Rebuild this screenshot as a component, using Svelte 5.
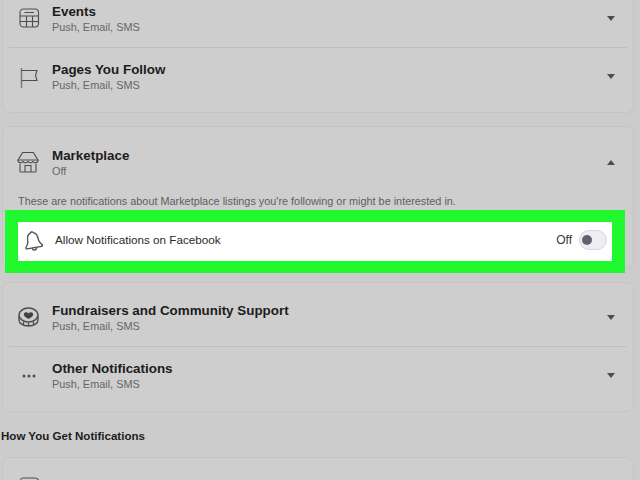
<script>
  const groupOne = [
    { id: 'events', title: 'Events', sub: 'Push, Email, SMS' },
    { id: 'pages', title: 'Pages You Follow', sub: 'Push, Email, SMS' }
  ];
  const groupTwo = [
    { id: 'fundraisers', title: 'Fundraisers and Community Support', sub: 'Push, Email, SMS' },
    { id: 'other', title: 'Other Notifications', sub: 'Push, Email, SMS' }
  ];
</script>

{#snippet icon(id)}
  <svg class="icon" width="24" height="24" viewBox="0 0 24 24" fill="none" stroke="#4b4d50" stroke-width="1.1">
    {#if id === 'events'}
      <rect x="3" y="3" width="18.500" height="18" rx="3.500" />
      <path d="M3 10h18.500M3 15.500h18.500M9.500 10v11M15.500 10v11M7.500 6.500h9.500" />
    {:else if id === 'pages'}
      <path d="M4.500 3v20" stroke="#77797c" stroke-width="1.500" />
      <path d="M4.500 5.500h15.500l-1.500 5 1.500 5h-15.500" />
    {:else if id === 'market'}
      <path d="M5 3.500c0-.5.500-1 1-1h10c.5 0 1 .500 1 1l4 6.500h-20z" />
      <path d="M1 10c0 3.500 4.500 3.500 5 1 .5 2.500 4.500 2.500 5 0 .5 2.500 4.500 2.500 5 0 .5 2.500 5 2.500 5-1" />
      <path d="M3 13.500v7.500a1 1 0 0 0 1 1h14a1 1 0 0 0 1-1v-7.500M8 22v-6.500h6v6.500" />
    {:else if id === 'bell'}
      <g transform="rotate(-10 12 12)" stroke-width="1.300">
        <path d="M10.200 5a2 2 0 0 1 3.600 0c3.500 1 3.600 4.500 3.600 7.500 0 3 2.300 4.500 3 6a1 1 0 0 1-1 1.200h-14.800a1 1 0 0 1-1-1.200c.7-1.500 3-3 3-6 0-3 .1-6.500 3.600-7.500z" />
        <path d="M9.600 19.900c.5 3 4.300 3 4.800 0" />
      </g>
    {:else if id === 'fundraisers'}
      <ellipse cx="11.500" cy="10" rx="9.500" ry="7" stroke-width="1.500" />
      <path d="M2 11v4c0 3 3.500 6 9.500 6s9.500-3 9.500-6v-4M6.500 17v3.500M11.500 18v3M16.500 17v3.500" stroke-width="1.400" />
      <path d="M11.500 14c-3-1.800-4.700-3-4.700-4.800 0-2.300 3.300-2.800 4.700-.8 1.400-2 4.700-1.500 4.700.8 0 1.800-1.700 3-4.700 4.800z" fill="#3f4144" stroke="none" />
    {:else}
      <circle cx="7" cy="12" r="1.500" fill="#4b4d50" stroke="none" />
      <circle cx="12" cy="12" r="1.500" fill="#4b4d50" stroke="none" />
      <circle cx="17" cy="12" r="1.500" fill="#4b4d50" stroke="none" />
    {/if}
  </svg>
{/snippet}

{#snippet row(item)}
  <div class="row">
    {@render icon(item.id)}
    <div class="text">
      <div class="title">{item.title}</div>
      <div class="sub">{item.sub}</div>
    </div>
    <span class="caret"></span>
  </div>
{/snippet}

<div class="page">
  <section class="card first">
    {#each groupOne as item}
      {@render row(item)}
    {/each}
  </section>

  <section class="card market">
    <div class="row">
      {@render icon('market')}
      <div class="text">
        <div class="title">Marketplace</div>
        <div class="sub">Off</div>
      </div>
      <span class="caret up"></span>
    </div>
    <p class="note">These are notifications about Marketplace listings you're following or might be interested in.</p>
    <div class="highlight">
      <div class="allow">
        {@render icon('bell')}
        <span class="allow-label">Allow Notifications on Facebook</span>
        <span class="off">Off</span>
        <span class="toggle"><span class="knob"></span></span>
      </div>
    </div>
  </section>

  <section class="card">
    {#each groupTwo as item}
      {@render row(item)}
    {/each}
  </section>

  <h2>How You Get Notifications</h2>

  <section class="card last">
    <div class="row">
      {@render icon('events')}
    </div>
  </section>
</div>

<style>
  :global(body) {
    background: #cccccc;
    overflow: hidden;
  }
  .page {
    width: 640px;
    height: 480px;
    overflow: hidden;
    padding: 0 6px 0 2px;
    box-sizing: border-box;
    font-family: "Liberation Sans", Arial, sans-serif;
  }
  .card {
    border: 1px solid #c5c5c5;
    border-radius: 8px;
    margin-bottom: 13px;
    padding: 5px 6px 7px;
    background: #cecece;
  }
  .first {
    margin-top: -17px;
  }
  .market {
    padding-top: 6px;
    height: 142px;
    margin-bottom: 14px;
    box-sizing: border-box;
  }
  .last {
    padding-top: 0;
  }
  .row {
    display: flex;
    align-items: center;
    gap: 11.500px;
    height: 58px;
    box-sizing: border-box;
    padding: 0 12px 0 7.500px;
    border-top: 1px solid #bfbfbf;
  }
  .card .row:first-child {
    border-top: none;
  }
  .icon {
    flex: none;
    width: 24px;
    height: 24px;
  }
  .text {
    flex: 1;
  }
  .row:first-child .text {
    padding-top: 2px;
  }
  .title {
    font-size: 13.400px;
    font-weight: 700;
    line-height: 17px;
    color: #1c1c1c;
  }
  .sub {
    font-size: 10.900px;
    line-height: 15px;
    color: #666;
  }
  .caret {
    width: 0;
    height: 0;
    border-left: 4.500px solid transparent;
    border-right: 4.500px solid transparent;
    border-top: 5px solid #4b4d50;
  }
  .caret.up {
    border-top: none;
    border-bottom: 5px solid #4b4d50;
  }
  .note {
    margin: 3px 0 0;
    padding: 0 9px;
    font-size: 10.870px;
    line-height: 14px;
    color: #5e5e5e;
  }
  .highlight {
    margin: 2px 2px 0 -4px;
    padding: 12px 13px;
    background: #1ff92e;
  }
  .allow {
    display: flex;
    align-items: center;
    height: 39px;
    box-sizing: border-box;
    padding: 0 5px 4px 3px;
    background: #fff;
    color: #2a2a2a;
    font-size: 11.700px;
  }
  .allow-label {
    flex: 1;
    margin-left: 10px;
  }
  .off {
    font-size: 12px;
    margin-right: 7px;
    color: #3a3a3a;
  }
  .toggle {
    display: flex;
    align-items: center;
    width: 28px;
    height: 20px;
    box-sizing: border-box;
    padding: 0 0 0 2px;
    border: 1px solid #d6d7da;
    border-radius: 10px;
    background: #eceef1;
  }
  .knob {
    width: 10px;
    height: 10px;
    border-radius: 50%;
    background: #5f6470;
  }
  h2 {
    margin: 17px 0 14px -1px;
    font-size: 11.550px;
    line-height: 14px;
    font-weight: 700;
    color: #1c1c1c;
  }
</style>
